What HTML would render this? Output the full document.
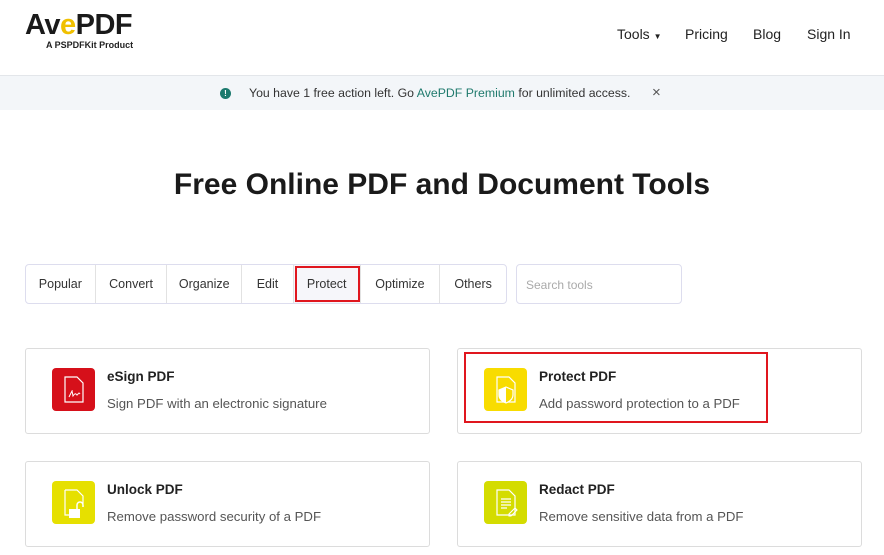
<!DOCTYPE html>
<html><head><meta charset="utf-8"><style>
*{box-sizing:border-box;margin:0;padding:0}
body{width:884px;height:555px;overflow:hidden;background:#fff;font-family:"Liberation Sans",sans-serif;color:#222;position:relative}
.a{position:absolute}
.nav{font-size:14px;color:#222;top:26px}
.tabs{left:25px;top:264px;width:482px;height:40px;border:1px solid #dde;border-radius:4px;display:flex;font-size:12.5px;color:#333}
.tabs div{border-right:1px solid #e2e2e2;display:flex;align-items:center;justify-content:center;height:100%}
.tabs div:last-child{border:none}
.card{border:1px solid #dcdcdc;border-radius:3px;width:405px;height:86px;background:#fff}
.ic{width:43px;height:43px;border-radius:4px;left:26px;top:19px}
.t{left:81px;top:20px;font-size:13.5px;font-weight:bold;color:#222}
.d{left:81px;top:47px;font-size:13.2px;color:#555}
</style></head><body>
<div class="a" style="left:25px;top:9px;font-size:29px;font-weight:900;letter-spacing:-0.5px;color:#1a1a1a">Av<span style="color:#f0c000">e</span>PDF</div>
<div class="a" style="left:46px;top:40px;font-size:9px;font-weight:bold;color:#222">A PSPDFKit Product</div>
<div class="a nav" style="left:617px">Tools <span style="font-size:8px">▼</span></div>
<div class="a nav" style="left:685px">Pricing</div>
<div class="a nav" style="left:753px">Blog</div>
<div class="a nav" style="left:807px">Sign In</div>
<div class="a" style="left:0;top:75px;width:884px;height:35px;background:#f3f6f9;border-top:1px solid #e3e6ea"></div>
<div class="a" style="left:220px;top:88px;width:11px;height:11px;border-radius:50%;background:#1c7a6e;color:#fff;font-size:8px;font-weight:bold;text-align:center;line-height:11px">!</div>
<div class="a" style="left:249px;top:86px;font-size:12.3px;color:#333">You have 1 free action left. Go <span style="color:#1f7a6d">AvePDF Premium</span> for unlimited access.</div>
<div class="a" style="left:652px;top:84px;font-size:15px;color:#555">×</div>
<div class="a" style="left:0;top:168px;width:884px;text-align:center;font-size:30px;font-weight:bold;color:#1a1a1a">Free Online PDF and Document Tools</div>
<div class="a tabs">
<div style="width:70px">Popular</div><div style="width:72px">Convert</div><div style="width:75px">Organize</div><div style="width:52px">Edit</div><div style="width:67px;background:#f6f6fa;outline:2px solid #e0161e;outline-offset:-3px">Protect</div><div style="width:80px">Optimize</div><div style="width:66px">Others</div></div>
<div class="a" style="left:516px;top:264px;width:166px;height:40px;border:1px solid #dde;border-radius:4px;font-size:12px;color:#aaa;padding:13px 9px">Search tools</div>

<div class="a card" style="left:25px;top:348px">
<div class="a ic" style="background:#d6101a"><svg width="43" height="43"><path d="M13 9h12l6 6v19H13z" fill="none" stroke="#fff" stroke-width="1.2"/><path d="M17 29q4-8 3-6l1 5q2-3 3-2q1 2 2 0q1-2 2 0" fill="none" stroke="#fff" stroke-width="1"/></svg></div>
<div class="a t">eSign PDF</div><div class="a d">Sign PDF with an electronic signature</div></div>

<div class="a card" style="left:457px;top:348px">
<div class="a ic" style="background:#f8dc00"><svg width="43" height="43"><path d="M13 9h12l6 6v19H13z" fill="none" stroke="#fff" stroke-width="1.2"/><path d="M22 19l7 3v5q0 5-7 8q-7-3-7-8v-5z" fill="#f8dc00" stroke="#fff" stroke-width="1.2"/><path d="M22 19v16q-7-3-7-8v-5z" fill="#fff"/></svg></div>
<div class="a t">Protect PDF</div><div class="a d">Add password protection to a PDF</div></div>
<div class="a" style="left:464px;top:352px;width:304px;height:71px;border:2px solid #e0161e"></div>

<div class="a card" style="left:25px;top:461px">
<div class="a ic" style="background:#e6e000"><svg width="43" height="43"><path d="M13 9h12l6 6v8M13 9v25h4" fill="none" stroke="#fff" stroke-width="1.2"/><rect x="17" y="28" width="11" height="9" fill="#fff"/><path d="M25 28v-4a3 3 0 0 1 6 0v2" fill="none" stroke="#fff" stroke-width="1.5"/></svg></div>
<div class="a t">Unlock PDF</div><div class="a d">Remove password security of a PDF</div></div>

<div class="a card" style="left:457px;top:461px">
<div class="a ic" style="background:#d4dc00"><svg width="43" height="43"><path d="M13 9h12l6 6v19H13z" fill="none" stroke="#fff" stroke-width="1.2"/><path d="M17 18h10M17 21h10M17 24h10M17 27h6" stroke="#fff" stroke-width="1.2"/><path d="M25 33l6-6 2 2-6 6h-2z" fill="none" stroke="#fff" stroke-width="1.1"/></svg></div>
<div class="a t">Redact PDF</div><div class="a d">Remove sensitive data from a PDF</div></div>
</body></html>
